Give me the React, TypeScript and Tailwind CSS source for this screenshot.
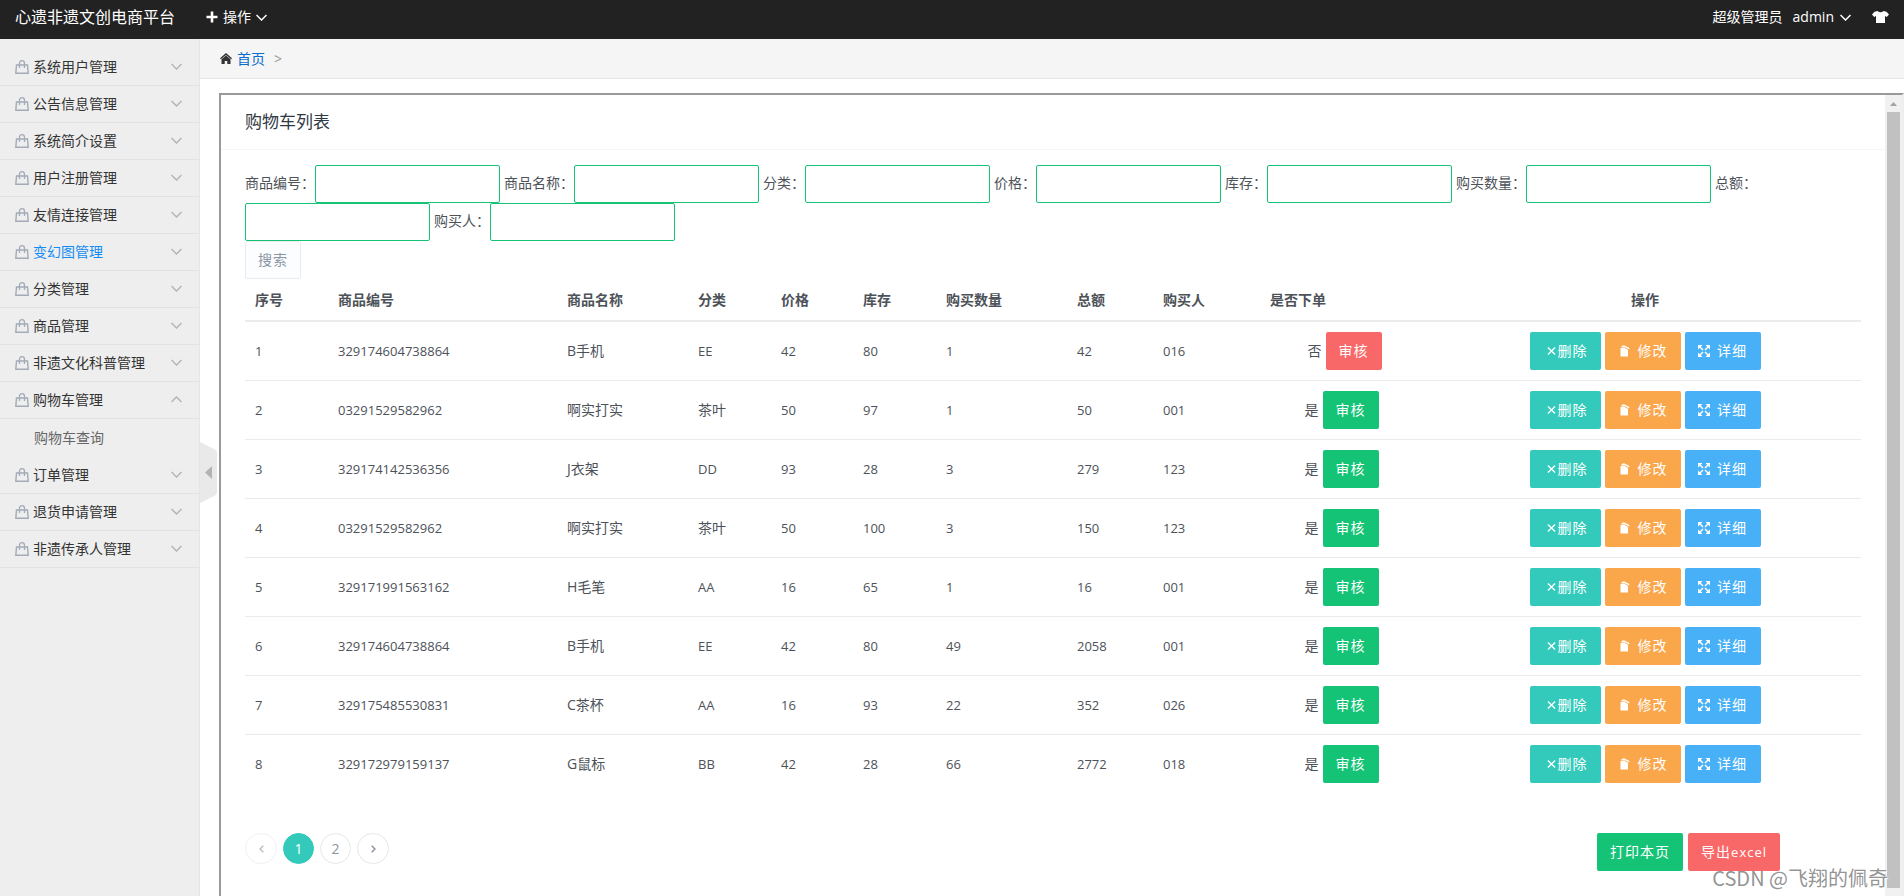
import type { ReactNode } from "react";

const menus = [
    { name: "系统用户管理" },
    { name: "公告信息管理" },
    { name: "系统简介设置" },
    { name: "用户注册管理" },
    { name: "友情连接管理" },
    { name: "变幻图管理", active: true },
    { name: "分类管理" },
    { name: "商品管理" },
    { name: "非遗文化科普管理" },
    { name: "购物车管理", children: ["购物车查询"] },
    { name: "订单管理" },
    { name: "退货申请管理" },
    { name: "非遗传承人管理" },
];

const filters = ["商品编号", "商品名称", "分类", "价格", "库存", "购买数量", "总额", "购买人"];

const columns = [
    { title: "序号", width: "w-[83px]" },
    { title: "商品编号", width: "w-[229px]" },
    { title: "商品名称", width: "w-[131px]" },
    { title: "分类", width: "w-[83px]" },
    { title: "价格", width: "w-[82px]" },
    { title: "库存", width: "w-[83px]" },
    { title: "购买数量", width: "w-[131px]" },
    { title: "总额", width: "w-[86px]" },
    { title: "购买人", width: "w-[107px]" },
    { title: "是否下单", width: "w-[169px]" },
    { title: "操作", width: "w-[432px]" },
];

// 商品编号, 商品名称, 分类, 价格, 库存, 购买数量, 总额, 购买人, 是否下单
const rows = [
    ["329174604738864", "B手机", "EE", "42", "80", "1", "42", "016", "否"],
    ["03291529582962", "啊实打实", "茶叶", "50", "97", "1", "50", "001", "是"],
    ["329174142536356", "J衣架", "DD", "93", "28", "3", "279", "123", "是"],
    ["03291529582962", "啊实打实", "茶叶", "50", "100", "3", "150", "123", "是"],
    ["329171991563162", "H毛笔", "AA", "16", "65", "1", "16", "001", "是"],
    ["329174604738864", "B手机", "EE", "42", "80", "49", "2058", "001", "是"],
    ["329175485530831", "C茶杯", "AA", "16", "93", "22", "352", "026", "是"],
    ["329172979159137", "G鼠标", "BB", "42", "28", "66", "2772", "018", "是"],
];

export default function App() {
    return (
        <div className="flex h-screen flex-col overflow-hidden bg-white text-sm text-[#333] [font-family:'Open_Sans','Noto_Sans_CJK_SC',sans-serif]">
            <TopBar />
            <div className="flex min-h-0 flex-1">
                <Sidebar />
                <div className="relative flex min-w-0 flex-1 flex-col">
                    <Breadcrumb />

                    {/* Sidebar toggle */}
                    <button
                        type="button"
                        aria-label="收起菜单"
                        className="absolute top-[403px] left-0 h-[61px] w-[17px]"
                    >
                        <svg viewBox="0 0 17 61" className="h-full w-full">
                            <path d="M0 0 L15 7.500 Q17 8.500 17 11 V50 Q17 52.500 15 53.500 L0 61Z" fill="#e9e9e9" />
                            <path d="M5 30.500 L12 24 V37Z" fill="#b3b3b3" />
                        </svg>
                    </button>

                    <div className="mt-3.5 ml-[19px] flex min-h-0 flex-1 border-t-2 border-r-2 border-l-2 border-t-[#9a9a9a] border-r-[#eee] border-l-[#9a9a9a]">
                        <CartPanel />
                        <ScrollBar />
                    </div>
                </div>
            </div>

            <div className="pointer-events-none absolute right-4 bottom-2 text-[20px] leading-5 text-[#777]/80 [font-family:'Noto_Sans_CJK_SC',sans-serif] [text-shadow:1px_1px_1px_#fff]">
                CSDN @飞翔的佩奇
            </div>
        </div>
    );
}

function TopBar() {
    return (
        <header className="flex h-[39px] shrink-0 items-start bg-[#222] px-[15px] text-white">
            <h1 className="text-base leading-[34px]">心遗非遗文创电商平台</h1>
            <a href="#" className="ml-[31px] flex items-center leading-[34px]">
                <svg viewBox="0 0 12 12" className="mr-[5px] size-3">
                    <path d="M6 0.500 V11.500 M0.500 6 H11.500" stroke="currentColor" strokeWidth="2.600" />
                </svg>
                操作
                <Chevron className="ml-[5px] h-[7px] w-[11px]" />
            </a>
            <div className="ml-auto flex items-center leading-[34px]">
                <span>超级管理员</span>
                <a href="#" className="ml-2.5 flex items-center">
                    admin
                    <Chevron className="ml-1.5 h-[7px] w-[11px]" />
                </a>
                <a href="#" aria-label="换肤" className="ml-[21px]">
                    <svg viewBox="0 0 17 12" className="h-3 w-[17px]" fill="currentColor">
                        <path d="M5.500 0 Q8.500 2.400 11.500 0 L14.500 0.700 L17 3.500 L14.800 6 L13 5 V12 H4 V5 L2.200 6 L0 3.500 L2.500 0.700Z" />
                    </svg>
                </a>
            </div>
        </header>
    );
}

function Sidebar() {
    return (
        <nav className="w-[200px] shrink-0 border-r border-[#e5e5e5] bg-[#eee] pt-2.5">
            {menus.map((m) => (
                <div key={m.name}>
                    <a href="#" className="flex h-[37px] items-center border-b border-[#e2e2e2] pr-[17px] pl-[15px]">
                        <svg viewBox="0 0 14 14" className="mr-1 size-3.5" fill="none" stroke="#a3abb8">
                            <path d="M1.500 5 H12.500 L13.200 13.300 H0.800Z" strokeWidth="1.400" />
                            <path d="M4.500 8 V3.500 Q4.500 0.700 7 0.700 Q9.500 0.700 9.500 3.500 V8" strokeWidth="1.300" />
                        </svg>
                        <span className={m.active ? "text-[#148cf1]" : ""}>{m.name}</span>
                        <Chevron up={!!m.children} className="mb-0.5 ml-auto h-[7px] w-[11px] text-[#b5b5b5]" />
                    </a>
                    {m.children?.map((c) => (
                        <a key={c} href="#" className="block h-[38px] pl-[34px] leading-[38px] text-[#666]">
                            {c}
                        </a>
                    ))}
                </div>
            ))}
        </nav>
    );
}

function Breadcrumb() {
    return (
        <div className="flex h-10 shrink-0 items-center border-b border-[#e5e5e5] bg-[#f5f5f5] pl-5">
            <svg viewBox="0 0 12 11" className="h-[11px] w-3" fill="#333">
                <path d="M6 0 L12 5.300 L11.200 6.300 L6 1.900 L0.800 6.300 L0 5.300Z" />
                <path d="M6 2.600 L10.500 6.300 V11 H7.300 V8 H4.700 V11 H1.500 V6.300Z" />
            </svg>
            <a href="#" className="ml-[5px] text-[#0a6ccf]">
                首页
            </a>
            <span className="ml-[9px] text-[#999]">&gt;</span>
        </div>
    );
}

function CartPanel() {
    return (
        <main className="min-w-0 flex-1 overflow-hidden text-[#4d5259]">
            <h2 className="h-[55px] border-b border-[#f5f5f5] pl-6 text-[17px] leading-[54px] text-[#313944]">
                购物车列表
            </h2>

            <div className="pt-[15px] pr-6 pl-6">
                <form className="leading-[35px]">
                    {filters.map((f, i) => (
                        <span key={f}>
                            <label htmlFor={`filter-${i}`}>{f}：</label>
                            <input
                                id={`filter-${i}`}
                                type="text"
                                className="mr-1 h-[38px] w-[185px] rounded-[2px] border border-[#15c377] px-3 align-top"
                            />
                        </span>
                    ))}
                    <div>
                        <button
                            type="button"
                            className="block h-[38px] w-14 rounded-[2px] border border-[#ebebeb] bg-[#fcfdfe] leading-9 tracking-[1px] text-[#8b95a5]"
                        >
                            搜索
                        </button>
                    </div>
                </form>

                <table className="w-full table-fixed border-separate border-spacing-0 text-left">
                    <thead>
                        <tr>
                            {columns.map((c, i) => (
                                <th
                                    key={c.title}
                                    className={`${c.width} border-b-2 border-[#ebebeb] p-2.5 leading-[21px] font-semibold ${
                                        i === columns.length - 1 ? "text-center" : ""
                                    }`}
                                >
                                    {c.title}
                                </th>
                            ))}
                        </tr>
                    </thead>
                    <tbody className="[&>tr+tr>td]:border-t [&>tr+tr>td]:border-[#ebebeb]">
                        {rows.map((r, i) => (
                            <tr key={i}>
                                <Cell>{i + 1}</Cell>
                                {r.slice(0, 8).map((v, j) => (
                                    <Cell key={j}>{v}</Cell>
                                ))}
                                <td className="py-2.5">
                                    <div className={`flex items-center justify-center gap-1 ${r[8] === "是" ? "pr-1.5" : ""}`}>
                                        {r[8]}
                                        <Btn className={r[8] === "是" ? "bg-[#15c377]" : "bg-[#f96868]"}>审核</Btn>
                                    </div>
                                </td>
                                <td className="py-2.5">
                                    <div className="flex justify-center gap-1">
                                        <Btn className="w-[71px] bg-[#33cabb]">
                                            <svg viewBox="0 0 10 10" className="mr-0.5 ml-1 size-2.5">
                                                <path d="M1 1 L9 9 M9 1 L1 9" stroke="currentColor" strokeWidth="1.500" />
                                            </svg>
                                            删除
                                        </Btn>
                                        <Btn className="w-[76px] bg-[#faa64b]">
                                            <svg viewBox="0 0 10 12" className="mr-2 ml-0.5 h-3 w-2.5" fill="currentColor">
                                                <path d="M0.500 3 H5 L8 5 V11.500 H0.500Z" />
                                                <path d="M1.500 1 L4 0.300 L9.500 3 L9 4.600 L5.500 2.500 H1.500Z" />
                                            </svg>
                                            修改
                                        </Btn>
                                        <Btn className="w-[76px] bg-[#48b0f7]">
                                            <svg viewBox="0 0 12 12" className="mr-[7px] size-3" fill="currentColor">
                                                <path d="M0 0 H4.500 L0 4.500Z M12 0 V4.500 L7.500 0Z M0 12 V7.500 L4.500 12Z M12 12 H7.500 L12 7.500Z" />
                                                <path
                                                    d="M1 1 L5 5 M11 1 L7 5 M1 11 L5 7 M11 11 L7 7"
                                                    stroke="currentColor"
                                                    strokeWidth="1.500"
                                                />
                                            </svg>
                                            详细
                                        </Btn>
                                    </div>
                                </td>
                            </tr>
                        ))}
                    </tbody>
                </table>

                <div className="mt-10 flex items-start justify-between pr-[81px]">
                    <div className="flex gap-1.5 text-[#8b95a5]">
                        <PageBtn label="上一页" className="w-8 border-[#e4e7ea] opacity-60">
                            <svg viewBox="0 0 5 8" className="h-2 w-[5px]" fill="none">
                                <path d="M4.300 0.800 L1 4 L4.300 7.200" stroke="currentColor" strokeWidth="1.500" />
                            </svg>
                        </PageBtn>
                        <PageBtn className="w-[31px] border-[#33cabb] bg-[#33cabb] text-white">1</PageBtn>
                        <PageBtn className="w-[31px] border-[#e4e7ea]">2</PageBtn>
                        <PageBtn label="下一页" className="w-8 border-[#e4e7ea]">
                            <svg viewBox="0 0 5 8" className="h-2 w-[5px]" fill="none">
                                <path d="M0.700 0.800 L4 4 L0.700 7.200" stroke="currentColor" strokeWidth="1.500" />
                            </svg>
                        </PageBtn>
                    </div>
                    <div className="flex gap-[5px]">
                        <Btn className="bg-[#15c377]">打印本页</Btn>
                        <Btn className="bg-[#f96868]">
                            导出<span className="text-[13px]">excel</span>
                        </Btn>
                    </div>
                </div>
            </div>
        </main>
    );
}

function Cell({ children }: { children: ReactNode }) {
    // plain numbers are set one step smaller than the chinese text
    const numeric = /^\w+$/.test(String(children));
    return <td className={`p-2.5 ${numeric ? "text-[13px]" : ""}`}>{children}</td>;
}

function Btn({ className, children }: { className: string; children: ReactNode }) {
    return (
        <button
            type="button"
            className={`flex h-[38px] items-center justify-center rounded-[2px] px-[13px] tracking-[1px] whitespace-nowrap text-white ${className}`}
        >
            {children}
        </button>
    );
}

function PageBtn({ className, label, children }: { className: string; label?: string; children: ReactNode }) {
    return (
        <button
            type="button"
            aria-label={label}
            className={`flex h-[31px] items-center justify-center rounded-full border ${className}`}
        >
            {children}
        </button>
    );
}

function Chevron({ className, up }: { className: string; up?: boolean }) {
    return (
        <svg viewBox="0 0 11 7" className={className} fill="none" stroke="currentColor" strokeWidth="1.500">
            <path d={up ? "M0.500 6 L5.500 1 L10.500 6" : "M0.500 1 L5.500 6 L10.500 1"} />
        </svg>
    );
}

function ScrollBar() {
    return (
        <div className="flex w-[17px] shrink-0 flex-col items-center bg-[#f1f1f1] pb-2">
            <svg viewBox="0 0 17 17" className="size-[17px] shrink-0">
                <path d="M5 11 L8.500 7 L12 11Z" fill="#a3a3a3" />
            </svg>
            <div className="w-[13px] flex-1 bg-[#c1c1c1]" />
        </div>
    );
}
